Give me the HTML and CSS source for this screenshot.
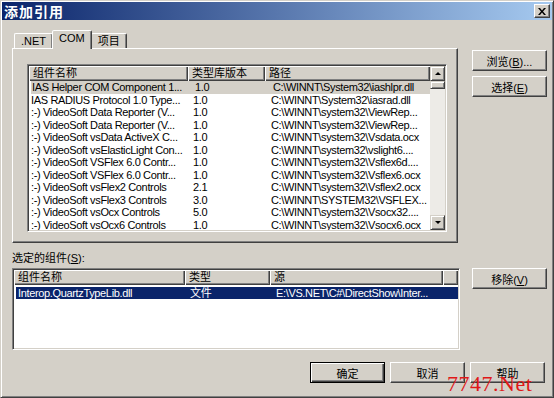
FILE: index.html
```html
<!DOCTYPE html>
<html lang="zh-CN">
<head>
    <meta charset="UTF-8">
    <title>添加引用</title>
    <link rel="stylesheet" href="styles.css">
</head>
<body>
    <div class="dialog">
        <div class="titlebar">
            <span class="title">添加引用</span>
            <span class="close">
                <svg width="8" height="7" viewBox="0 0 8 7"><path d="M0 0h2l2 2.5L6 0h2L5 3.5 8 7H6L4 4.5 2 7H0l3-3.5z" fill="#000"/></svg>
            </span>
        </div>

        <div class="main">
            <div class="refs">
                <div class="tabs">
                    <span class="tab">.NET</span>
                    <span class="tab active">COM</span>
                    <span class="tab">项目</span>
                </div>
                <div class="panel">
                    <div class="listview com-list">
                        <div class="lv-body">
                            <div class="lv-header">
                                <span class="hcell">组件名称</span>
                                <span class="hcell">类型库版本</span>
                                <span class="hcell">路径</span>
                            </div>
                            <div class="row hot"><span>IAS Helper COM Component 1...</span><span>1.0</span><span>C:\WINNT\System32\iashlpr.dll</span></div>
                            <div class="row"><span>IAS RADIUS Protocol 1.0 Type...</span><span>1.0</span><span>C:\WINNT\System32\iasrad.dll</span></div>
                            <div class="row"><span>:-) VideoSoft Data Reporter (V...</span><span>1.0</span><span>C:\WINNT\system32\ViewRep...</span></div>
                            <div class="row"><span>:-) VideoSoft Data Reporter (V...</span><span>1.0</span><span>C:\WINNT\system32\ViewRep...</span></div>
                            <div class="row"><span>:-) VideoSoft vsData ActiveX C...</span><span>1.0</span><span>C:\WINNT\system32\Vsdata.ocx</span></div>
                            <div class="row"><span>:-) VideoSoft vsElasticLight Con...</span><span>1.0</span><span>C:\WINNT\system32\vslight6....</span></div>
                            <div class="row"><span>:-) VideoSoft VSFlex 6.0 Contr...</span><span>1.0</span><span>C:\WINNT\system32\Vsflex6d....</span></div>
                            <div class="row"><span>:-) VideoSoft VSFlex 6.0 Contr...</span><span>1.0</span><span>C:\WINNT\system32\Vsflex6.ocx</span></div>
                            <div class="row"><span>:-) VideoSoft vsFlex2 Controls</span><span>2.1</span><span>C:\WINNT\system32\Vsflex2.ocx</span></div>
                            <div class="row"><span>:-) VideoSoft vsFlex3 Controls</span><span>3.0</span><span>C:\WINNT\SYSTEM32\VSFLEX...</span></div>
                            <div class="row"><span>:-) VideoSoft vsOcx Controls</span><span>5.0</span><span>C:\WINNT\system32\Vsocx32....</span></div>
                            <div class="row"><span>:-) VideoSoft vsOcx6 Controls</span><span>1.0</span><span>C:\WINNT\system32\Vsocx6.ocx</span></div>
                        </div>
                        <div class="scrollbar">
                            <span class="sb-btn"><i class="arrow up"></i></span>
                            <span class="sb-thumb"></span>
                            <span class="sb-track"></span>
                            <span class="sb-btn"><i class="arrow down"></i></span>
                        </div>
                    </div>
                </div>
            </div>

            <div class="side-buttons">
                <button class="btn">浏览(<u>B</u>)...</button>
                <button class="btn">选择(<u>E</u>)</button>
            </div>

            <div class="selected">
                <div class="label">选定的组件(<u>S</u>):</div>
                <div class="listview sel-list">
                    <div class="lv-header">
                        <span class="hcell">组件名称</span>
                        <span class="hcell">类型</span>
                        <span class="hcell">源</span>
                        <span class="hcell"></span>
                    </div>
                    <div class="rows">
                        <div class="row picked"><span>Interop.QuartzTypeLib.dll</span><span>文件</span><span>E:\VS.NET\C#\DirectShow\Inter...</span></div>
                    </div>
                </div>
            </div>

            <div class="side-buttons lower">
                <button class="btn">移除(<u>V</u>)</button>
            </div>
        </div>

        <div class="footer">
            <button class="btn default">确定</button>
            <button class="btn">取消</button>
            <button class="btn">帮助</button>
        </div>

        <div class="watermark">7747.Net</div>
    </div>
</body>
</html>
```

FILE: styles.css
```css
body {
    margin: 0;
    background: #d4d0c8;
}
.dialog {
    position: relative;
    width: 554px;
    height: 398px;
    box-sizing: border-box;
    padding: 1px;
    background: #d4d0c8;
    border: 1px solid;
    border-color: #d4d0c8 #404040 #404040 #d4d0c8;
    box-shadow: inset 1px 1px #fff, inset -1px -1px #808080;
    font: 11px "Liberation Sans", "Noto Sans CJK SC", sans-serif;
    color: #000;
}

/* barra de titulo */
.titlebar {
    height: 18px;
    display: flex;
    align-items: center;
    justify-content: space-between;
    padding: 0 2px 0 2px;
    background: linear-gradient(to right, #0a246a, #a6caf0);
}
.title {
    color: #fff;
    font-weight: bold;
    font-size: 14px;
    font-family: "Noto Sans CJK SC", sans-serif;
    letter-spacing: 1px;
}
.close {
    width: 16px;
    height: 14px;
    box-sizing: border-box;
    display: flex;
    align-items: center;
    justify-content: center;
    background: #d4d0c8;
    border: 1px solid;
    border-color: #fff #404040 #404040 #fff;
    box-shadow: inset -1px -1px #808080;
}

.main {
    display: grid;
    grid-template-columns: 448px 75px;
    column-gap: 12px;
    padding: 10px 0 0 10px;
}

/* pestañas */
.tabs {
    display: flex;
    align-items: flex-end;
    height: 18px;
    padding-left: 2px;
}
.tab {
    height: 15px;
    box-sizing: border-box;
    padding: 0 6px;
    line-height: 14px;
    border: 1px solid;
    border-bottom: none;
    border-color: #fff #404040 transparent #fff;
    box-shadow: inset -1px 0 #808080;
    border-radius: 2px 2px 0 0;
}
.tab.active {
    height: 19px;
    margin: 0 -1px -1px -1px;
    padding: 0 6px;
    line-height: 15px;
    background: #d4d0c8;
    position: relative;
    z-index: 1;
}
.panel {
    width: 446px;
    height: 195px;
    box-sizing: border-box;
    padding: 15px 10px 10px 14px;
    border: 1px solid;
    border-color: #fff #404040 #404040 #fff;
    box-shadow: inset -1px -1px #808080;
}

/* listas */
.listview {
    box-sizing: border-box;
    background: #fff;
    border: 1px solid;
    border-color: #808080 #fff #fff #808080;
    box-shadow: inset 1px 1px #404040, inset -1px -1px #d4d0c8;
    padding: 1px;
    overflow: hidden;
}
.com-list {
    width: 420px;
    height: 168px;
    display: flex;
}
.lv-body {
    width: 401px;
    overflow: hidden;
}
.lv-header {
    display: grid;
    grid-template-columns: 159px 77px 165px;
    height: 15px;
}
.hcell {
    background: #d4d0c8;
    box-shadow: inset 1px 1px #fff, inset -1px -1px #404040, inset -2px -2px #808080;
    line-height: 15px;
    padding-left: 4px;
    white-space: nowrap;
    overflow: hidden;
}
.row {
    display: grid;
    grid-template-columns: 159px 77px 165px;
    height: 12.5px;
    line-height: 12.5px;
    font-size: 11px;
    letter-spacing: -0.35px;
    white-space: nowrap;
}
.row span {
    overflow: hidden;
}
.row span:nth-child(1) { padding-left: 2px; }
.row span:nth-child(2) { padding-left: 5px; }
.row span:nth-child(3) { padding-left: 6px; }
.row.hot {
    background: #d4d0c8;
    margin-left: 2px;
}
.row.hot span:nth-child(1) { padding-left: 1px; }

.scrollbar {
    width: 15px;
    display: flex;
    flex-direction: column;
}
.sb-btn,
.sb-thumb {
    display: flex;
    align-items: center;
    justify-content: center;
    box-sizing: border-box;
    background: #d4d0c8;
    border: 1px solid;
    border-color: #d4d0c8 #404040 #404040 #d4d0c8;
    box-shadow: inset 1px 1px #fff, inset -1px -1px #808080;
}
.sb-btn { height: 15px; }
.sb-thumb { height: 8px; }
.sb-track {
    flex: 1;
    background: #edebe7;
}
.arrow {
    width: 0;
    height: 0;
    border-left: 3px solid transparent;
    border-right: 3px solid transparent;
}
.arrow.up { border-bottom: 3px solid #000; }
.arrow.down { border-top: 3px solid #000; }

/* botones */
.side-buttons {
    display: flex;
    flex-direction: column;
    gap: 5px;
    padding-top: 20px;
}
.side-buttons.lower {
    padding-top: 25px;
}
.btn {
    width: 75px;
    height: 21px;
    box-sizing: border-box;
    padding: 0;
    margin: 0;
    background: #d4d0c8;
    border: 1px solid;
    border-color: #fff #404040 #404040 #fff;
    box-shadow: inset -1px -1px #808080;
    font: 11px "Liberation Sans", "Noto Sans CJK SC", sans-serif;
    color: #000;
}
.btn.default {
    border-color: #000;
    box-shadow: inset 1px 1px #fff, inset -1px -1px #404040, inset -2px -2px #808080;
}

/* componentes elegidos */
.label {
    padding-top: 9px;
    line-height: 12px;
    margin-bottom: 4px;
}
.sel-list {
    width: 448px;
    height: 82px;
}
.sel-list .lv-header {
    grid-template-columns: 171px 85px 173px 15px;
}
.sel-list .rows {
    padding: 2px 0 0 2px;
}
.sel-list .row {
    grid-template-columns: 169px 85px 175px;
    height: 12px;
    line-height: 12px;
}
.row.picked {
    background: #0a246a;
    color: #fff;
}

.footer {
    display: flex;
    justify-content: flex-end;
    gap: 5px;
    padding: 12px 7px 0 0;
}

.watermark {
    position: absolute;
    left: 446px;
    top: 370px;
    color: #e01818;
    font: 22px "Liberation Serif", serif;
    letter-spacing: 0.5px;
}
```
